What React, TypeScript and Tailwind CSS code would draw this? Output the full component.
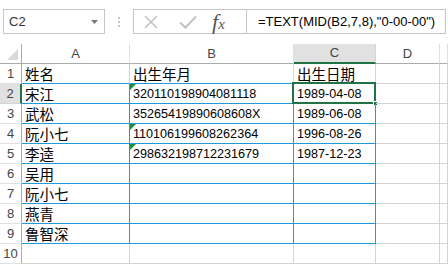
import React from 'react';

const rows: [string, string, string][] = [
  ['姓名', '出生年月', '出生日期'],
  ['宋江', '320110198904081118', '1989-04-08'],
  ['武松', '35265419890608608X', '1989-06-08'],
  ['阮小七', '110106199608262364', '1996-08-26'],
  ['李逵', '298632198712231679', '1987-12-23'],
  ['吴用', '', ''],
  ['阮小七', '', ''],
  ['燕青', '', ''],
  ['鲁智深', '', ''],
  ['', '', ''],
];

// rows whose B cell carries the green "number stored as text" flag
const flagged = [2, 4, 5];

const isCjk = (s: string) => /[\u4e00-\u9fff]/.test(s);

const Cell = ({ text, row, col }: { text: string; row: number; col: number }) => {
  const inTable = row >= 1 && row <= 9 && col <= 2;
  const bottom = inTable ? 'border-b-[#1f9ad6]' : 'border-b-[#d4d4d4]';
  const right = inTable && row >= 2 ? 'border-r-[#1f9ad6]' : 'border-r-[#d4d4d4]';
  const size = isCjk(text)
    ? "text-[14.5px] font-['Noto_Sans_CJK_SC',sans-serif] pt-[1px]"
    : "text-[12.6px] font-['Liberation_Sans',sans-serif] pt-[2px]";
  return (
    <div className={`relative flex items-center overflow-visible whitespace-nowrap border-r border-b pl-[3px] text-black ${bottom} ${right} ${size}`}>
      {col === 1 && flagged.includes(row) && (
        <svg className="absolute left-0 top-0" width="6" height="6" viewBox="0 0 6 6">
          <polygon points="0,0 6,0 0,6" fill="#1d8f3c" />
        </svg>
      )}
      {text}
      {col === 2 && row === 2 && (
        <>
          <div className="pointer-events-none absolute -left-[2px] -top-[2px] h-[22px] w-[84px] border-2 border-[#217346]" />
          <div className="absolute -bottom-[3px] -right-[3px] h-[5px] w-[5px] border border-white bg-[#217346]" />
        </>
      )}
    </div>
  );
};

export default function App() {
  return (
    <div className="h-[265px] w-[448px] overflow-hidden bg-white font-['Liberation_Sans','Noto_Sans_CJK_SC',sans-serif]">
      {/* formula bar */}
      <div className="flex h-[44px] items-start pt-[9px]">
        <div className="ml-[3px] flex h-[25px] w-[102px] items-center justify-between border border-[#c6c6c6] pl-[5px] pr-[6px] text-[13px] text-[#333]">
          <span>C2</span>
          <svg width="7" height="4" viewBox="0 0 7 4">
            <polygon points="0,0 7,0 3.5,4" fill="#7a7a7a" />
          </svg>
        </div>
        <div className="ml-[13px] mt-[8px] flex flex-col gap-[2px]">
          <span className="h-[2px] w-[2px] bg-[#c4c4c4]" />
          <span className="h-[2px] w-[2px] bg-[#c4c4c4]" />
          <span className="h-[2px] w-[2px] bg-[#c4c4c4]" />
        </div>
        <div className="ml-[13px] mr-[2px] flex h-[25px] flex-1 border border-[#c6c6c6]">
          <div className="flex w-[112px] items-center">
            <svg className="ml-[10px]" width="14" height="14" viewBox="0 0 14 14">
              <path d="M1 1 L13 13 M13 1 L1 13" stroke="#c2c2c2" strokeWidth="1.6" fill="none" />
            </svg>
            <svg className="ml-[21px]" width="18" height="14" viewBox="0 0 18 14">
              <path d="M1 7.5 L6.5 12.5 L17 1.5" stroke="#c2c2c2" strokeWidth="2" fill="none" />
            </svg>
            <span className="ml-[15px] font-['Liberation_Serif',serif] text-[22px] italic leading-none text-[#555]">
              f<span className="text-[15px]">x</span>
            </span>
          </div>
          <div className="flex flex-1 items-center whitespace-nowrap border-l border-[#c6c6c6] pl-[11px] text-[13px] text-black">
            =TEXT(MID(B2,7,8),"0-00-00")
          </div>
        </div>
      </div>

      {/* sheet */}
      <div className="grid auto-rows-[20px] grid-cols-[22px_108px_164px_82px_64px_1fr]">
        <div className="relative border-r border-b border-[#ababab]">
          <svg className="absolute bottom-[3px] right-[3px]" width="11" height="11" viewBox="0 0 11 11">
            <polygon points="11,0 11,11 0,11" fill="#dadada" />
          </svg>
        </div>
        {['A', 'B', 'C', 'D', ''].map((h, i) => (
          <div
            key={i}
            className={`flex items-center justify-center text-[13px] text-[#444] ${
              h === 'C'
                ? 'border-r border-b-2 border-r-[#d4d4d4] border-b-[#217346] bg-[#e1e1e1]'
                : 'border-r border-b border-r-[#e0e0e0] border-b-[#ababab]'
            }`}
          >
            {h}
          </div>
        ))}
        {rows.map((r, ri) => {
          const row = ri + 1;
          return (
            <React.Fragment key={row}>
              <div
                className={`flex items-center justify-center border-b text-[13px] text-[#444] ${
                  row === 2
                    ? 'border-r-2 border-r-[#217346] border-b-[#d4d4d4] bg-[#e1e1e1]'
                    : 'border-r border-r-[#ababab] border-b-[#e0e0e0]'
                }`}
              >
                {row}
              </div>
              {r.map((t, ci) => (
                <Cell key={ci} text={t} row={row} col={ci} />
              ))}
              <Cell text="" row={row} col={3} />
              <Cell text="" row={row} col={4} />
            </React.Fragment>
          );
        })}
      </div>
    </div>
  );
}
